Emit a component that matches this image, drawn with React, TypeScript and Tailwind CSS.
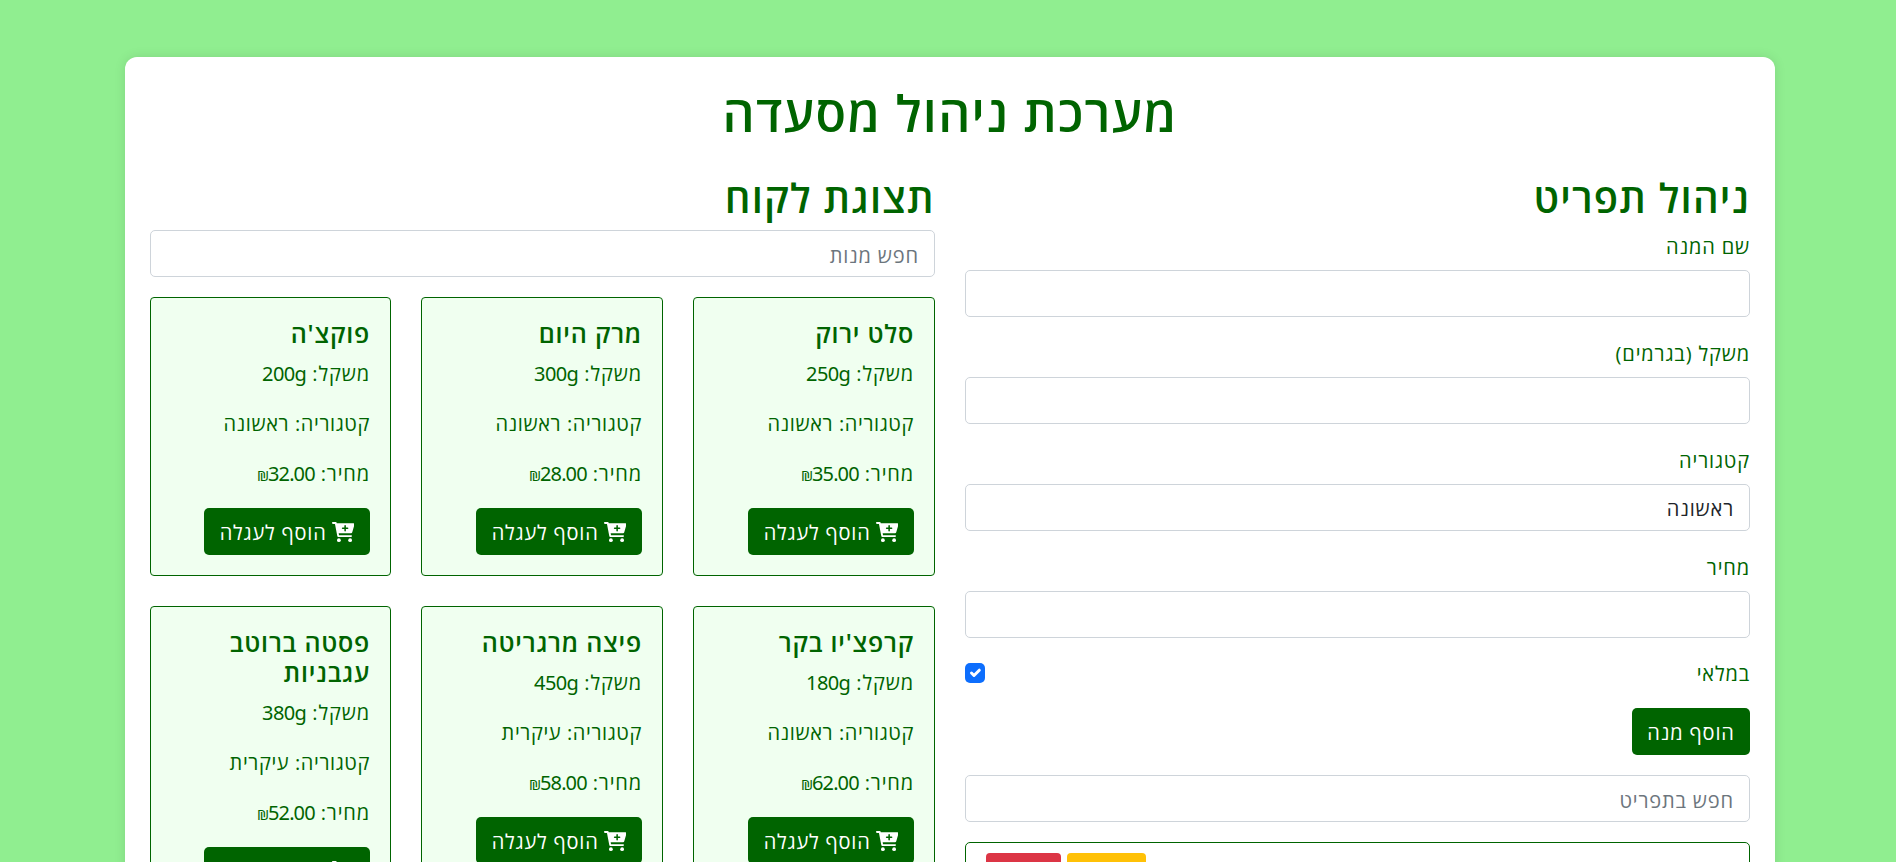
const dishes = [
  { name: "סלט ירוק", weight: 250, category: "ראשונה", price: "35.00" },
  { name: "מרק היום", weight: 300, category: "ראשונה", price: "28.00" },
  { name: "פוקצ'ה", weight: 200, category: "ראשונה", price: "32.00" },
  { name: "קרפצ'יו בקר", weight: 180, category: "ראשונה", price: "62.00" },
  { name: "פיצה מרגריטה", weight: 450, category: "עיקרית", price: "58.00" },
  { name: "פסטה ברוטב עגבניות", weight: 380, category: "עיקרית", price: "52.00" },
];

const inputClass =
  "block h-[47px] w-full rounded-[5px] border border-[#ced4da] bg-white px-[15px] pt-[3px] text-[#212529] outline-none placeholder:text-[#6c757d] placeholder:opacity-100";

const labelClass = "mb-2.5 block h-[30px] leading-[33px]";

const headingClass = "mb-2.5 h-12 text-[40px] leading-[51px] font-semibold tracking-[1.2px]";

function CartPlusIcon() {
  return (
    <svg viewBox="0 0 576 512" className="mt-px h-5 w-[22.5px]" fill="currentColor">
      <path
        fillRule="evenodd"
        d="M0 24C0 10.7 10.7 0 24 0H96C107.5 0 117.4 8.2 119.6 19.5L122 32H541.8C562.1 32 578.3 52.2 572.6 72.7L518.6 264.7C514.7 278.5 502.1 288 487.8 288H170.7L179.9 336H488C501.3 336 512 346.7 512 360C512 373.3 501.3 384 488 384H159.1C148.5 384 138.6 375.8 136.4 364.5L76.1 48H24C10.7 48 0 37.3 0 24ZM252 160C252 171 260.1 180 272 180H316V224C316 235 324.1 244 336 244C347 244 356 235 356 224V180H400C411 180 420 171 420 160C420 148.1 411 140 400 140H356V96C356 85 347 76 336 76C324.1 76 316 85 316 96V140H272C260.1 140 252 148.1 252 160Z"
      />
      <circle cx="176" cy="464" r="48" />
      <circle cx="464" cy="464" r="48" />
    </svg>
  );
}

function Field({ label }: { label: string }) {
  return (
    <div className="mb-5">
      <label className={labelClass}>{label}</label>
      <input className={inputClass} />
    </div>
  );
}

function DishCard({ dish }: { dish: (typeof dishes)[number] }) {
  return (
    <div className="rounded-[4px] border border-[#006400] bg-[#f0fff0] p-5">
      <h5 className="mb-2.5 text-[25px] leading-[30px] font-semibold tracking-[0.8px]">{dish.name}</h5>
      <p className="mb-5 h-[30px] leading-[32px]">
        משקל:{" "}
        <span dir="ltr" className="font-['Noto_Sans'] tracking-[-0.6px]">
          {dish.weight}g
        </span>
      </p>
      <p className="mb-5 h-[30px] leading-[32px] tracking-[0.6px]">קטגוריה: {dish.category}</p>
      <p className="mb-5 h-[30px] leading-[32px]">
        מחיר:{" "}
        <span dir="ltr" className="font-['Noto_Sans'] tracking-[-0.9px]">
          <span className="text-[15px]">₪</span>
          {dish.price}
        </span>
      </p>
      <button className="flex h-[47px] w-[166px] items-center gap-[5px] rounded-[5px] bg-[#006400] pr-4 tracking-[0.8px] whitespace-nowrap text-white">
        <CartPlusIcon />
        <span className="pt-0.5">הוסף לעגלה</span>
      </button>
    </div>
  );
}

export default function App() {
  return (
    <div
      dir="rtl"
      className="h-[862px] overflow-hidden bg-[#90ee90] pt-[57px] font-['Open_Sans',sans-serif] text-[20px] leading-[30px] tracking-[0.85px] text-[#006400]"
    >
      <main className="mr-[121px] h-[1200px] w-[1650px] rounded-[12px] bg-white p-[25px] shadow-[0_0_12px_rgba(0,0,0,0.1)]">
        <h1 className="mb-[30px] h-[60px] text-center text-[50px] leading-[63px] font-semibold tracking-[1.35px]">מערכת ניהול מסעדה</h1>
        <div className="grid grid-cols-2 gap-[30px]">
          <section>
            <h2 className={headingClass}>ניהול תפריט</h2>
            <Field label="שם המנה" />
            <Field label="משקל (בגרמים)" />
            <div className="mb-5">
              <label className={labelClass}>קטגוריה</label>
              <div className="flex h-[47px] items-center rounded-[5px] border border-[#ced4da] px-[15px] pt-[3px] text-[#212529]">ראשונה</div>
            </div>
            <Field label="מחיר" />
            <div className="mb-5 flex h-[30px] items-center justify-between">
              <label className="pt-0.5">במלאי</label>
              <span className="flex size-5 items-center justify-center rounded-[5px] bg-[#0d6efd]">
                <svg viewBox="0 0 20 20" className="size-5" fill="none" stroke="#fff" strokeWidth="3" strokeLinecap="round" strokeLinejoin="round">
                  <path d="m6.5 10 2.5 2.5 5.3-5.3" />
                </svg>
              </span>
            </div>
            <button className="mb-5 block h-[47px] w-[118px] rounded-[5px] bg-[#006400] pt-0.5 text-white">הוסף מנה</button>
            <input className={inputClass} placeholder="חפש בתפריט" />
            <div className="mt-5 flex h-[70px] justify-end gap-1.5 rounded-[5px] border border-[#006400] px-5 pt-2.5">
              <span className="h-10 w-[79px] rounded-[4px] bg-[#ffc107]" />
              <span className="h-10 w-[75px] rounded-[4px] bg-[#dc3545]" />
            </div>
          </section>
          <section>
            <h2 className={headingClass}>תצוגת לקוח</h2>
            <input className={inputClass} placeholder="חפש מנות" />
            <div className="mt-5 grid grid-cols-[242px_242px_241px] gap-[30px]">
              {dishes.map((dish) => (
                <DishCard key={dish.name} dish={dish} />
              ))}
            </div>
          </section>
        </div>
      </main>
    </div>
  );
}
